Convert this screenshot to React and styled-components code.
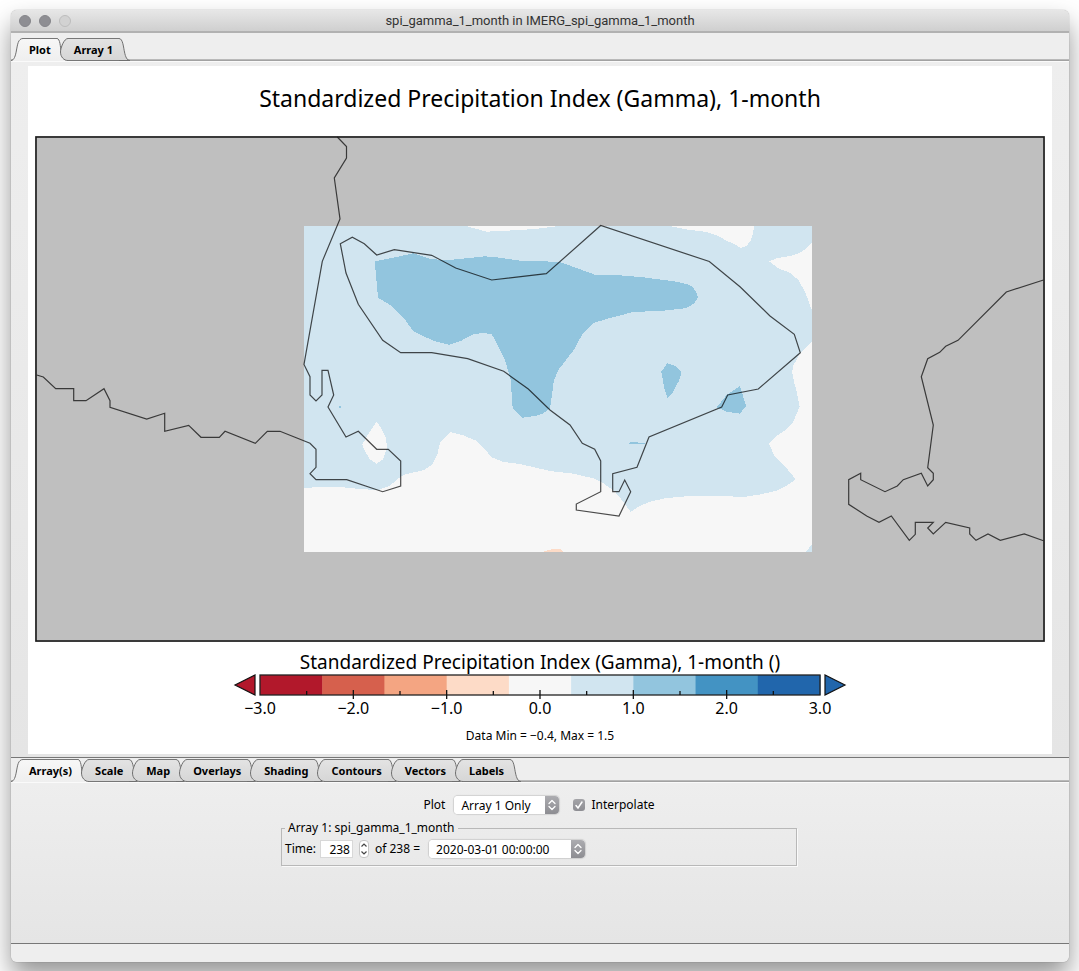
import React, { useState } from "react";
import styled, { createGlobalStyle } from "styled-components";

const GlobalStyle = createGlobalStyle`
  *, *::before, *::after { box-sizing: border-box; }
  html, body { margin: 0; padding: 0; background: #fff; }
  body, button, input, select {
    font-family: "Noto Sans", "Open Sans", "Liberation Sans", sans-serif;
    color: #000;
  }
`;

const Desktop = styled.div`
  display: flex;
  min-height: 100vh;
  padding: 10px 10px 9px 11px;
  overflow: hidden;
`;

const Window = styled.main`
  flex: 1;
  min-width: 0;
  display: flex;
  flex-direction: column;
  border-radius: 6px;
  background: #eee;
  box-shadow: 0 0 1px rgba(0, 0, 0, 0.5), 0 14px 26px rgba(0, 0, 0, 0.42);
`;

const TitleBar = styled.header`
  display: grid;
  grid-template-columns: 1fr auto 1fr;
  align-items: center;
  height: 23px;
  padding: 0 8px;
  border-radius: 6px 6px 0 0;
  border-bottom: 2px solid #b1b1b1;
  background: linear-gradient(#e7e7e7, #cfcfcf);
`;

const Lights = styled.div`
  display: flex;
  gap: 8px;
`;

const Light = styled.button`
  width: 12px;
  height: 12px;
  padding: 0;
  border-radius: 50%;
  border: 1px solid ${(p) => (p.disabled ? "#bdbdbd" : "#85858a")};
  background: ${(p) => (p.disabled ? "#d2d2d2" : "#8e8e93")};
`;

const WindowTitle = styled.h1`
  margin: 0;
  font-family: Roboto, "Liberation Sans", sans-serif;
  font-size: 13px;
  font-weight: 400;
  line-height: 20px;
  color: #333;
`;

const TabStrip = styled.div`
  display: flex;
  align-items: flex-end;
  padding-top: ${(p) => p.$space}px;
  background: linear-gradient(to top, #a2a2a2 0 1px, #b9b9b9 1px 2px, #eee 2px);
`;

const TabButton = styled.button`
  display: flex;
  height: 23px;
  margin: 0;
  margin-right: -8px;
  padding: 0;
  border: 0;
  background: none;
  font-size: 11px;
  font-weight: 700;
`;

const TabLabel = styled.span`
  height: 23px;
  padding: 0 6px;
  border-top: 1px solid #777;
  border-bottom: 1px solid ${(p) => (p.$active ? "#efefef" : "#777")};
  background: ${(p) =>
    p.$active ? "linear-gradient(#f7f7f7, #efefef)" : "linear-gradient(#e3e3e3, #d6d6d6)"};
  line-height: 22px;
`;

function TabCap({ active, side }) {
  const id = `cap-${active ? "on" : "off"}-${side}`;
  const shapes = {
    start: { w: 12, fill: "M12 0C6 0 6 6 5 12C4 18 3 22.500 0 22.500V23H12Z", line: "M12 .5C7 .5 6.500 7 5.500 12C4.500 18 3 22.500 0 22.500" },
    left: { w: 8, fill: "M8 0C3 0 .5 10 .5 14C.5 19 4 23 8 23Z", line: "M8 .5C4 .5 .5 10 .5 14C.5 19 4 22.500 8 22.500" },
    right: { w: 11, fill: "M0 0C4 0 4.500 10 5.500 14C6.500 19 8 23 11 23H0Z", line: "M0 .5C4 .5 4.500 10 5.500 14C6.500 19 8 22.500 11 22.500H0" },
    rightOn: { w: 11, fill: "M0 0C3 0 3.500 9 4 14C4 19 7 23 11 23H0Z", line: "M0 .5C3 .5 3.500 9 4 14" },
  };
  const s = shapes[active ? (side === "left" ? "start" : "rightOn") : side];
  return (
    <svg width={s.w} height="23" viewBox={`0 0 ${s.w} 23`} aria-hidden="true">
      <defs>
        <linearGradient id={id} x1="0" y1="0" x2="0" y2="1">
          <stop offset="0" stopColor={active ? "#f7f7f7" : "#e3e3e3"} />
          <stop offset="1" stopColor={active ? "#efefef" : "#d6d6d6"} />
        </linearGradient>
      </defs>
      <path d={s.fill} fill={`url(#${id})`} />
      <path d={s.line} fill="none" stroke="#6f6f6f" />
    </svg>
  );
}

function Tabs({ names, space }) {
  const [current, setCurrent] = useState(names[0]);
  return (
    <TabStrip role="tablist" $space={space}>
      {names.map((name) => {
        const active = name === current;
        return (
          <TabButton key={name} type="button" role="tab" aria-selected={active} onClick={() => setCurrent(name)}>
            <TabCap active={active} side="left" />
            <TabLabel $active={active}>{name}</TabLabel>
            <TabCap active={active} side="right" />
          </TabButton>
        );
      })}
    </TabStrip>
  );
}

const PlotPane = styled.section`
  padding: 4px 17px 3px;
  border-top: 1px solid #fafafa;
  border-bottom: 1px solid #777;
  background: linear-gradient(#eee, #e5e5e5);
`;

const Sheet = styled.div`
  display: flex;
  flex-direction: column;
  align-items: center;
  padding: 0 7px 8px;
  background: #fff;
`;

const PlotTitle = styled.h2`
  margin: 0;
  font-size: 23px;
  font-weight: 400;
  line-height: 65px;
  height: 70px;
`;

const MapDrawing = styled.svg`
  display: block;
  width: 100%;
  height: auto;
`;

const ScaleTitle = styled.h3`
  margin: 8px 0 0;
  font-size: 19px;
  font-weight: 400;
  line-height: 24px;
`;

const ScaleDrawing = styled.svg`
  display: block;
  width: 616px;
  max-width: 100%;
  height: auto;
  font-size: 16px;
`;

const DataNote = styled.p`
  margin: 4px 0 0;
  font-size: 12px;
  line-height: 20px;
`;

function PrecipitationMap() {
  return (
    <MapDrawing viewBox="35 136 1010 506" role="img" aria-label="Map of the precipitation index">
      <rect x="35" y="136" width="1010" height="506" fill="#bfbfbf" />
      <g shapeRendering="crispEdges">
        <rect x="304" y="226" width="508" height="326" fill="#d1e5f0" />
        <g fill="#f7f7f7">
          <path d="M466 226L486.700 231.700L507 230.700L535 229L559 226Z" />
          <path d="M669 226L687 229.500L705 231.700L716 235L726.700 240.700L734 244L740.700 248L746.700 245.700L751 240L753.300 231.700L754 226Z" />
          <path d="M812 242.700L803.300 250.700Q797 254.500 790 256L776.700 258.300L769 261.300L778.300 268.300L790 272.700L798.300 280L805 291.700L809.300 303.300L812 310.700Z" />
          <path d="M812 341.700L800 353.300L792.700 366.700L792.300 373.300L794.300 383.300L795.700 387L799.700 406.700L793.300 421.700L786.700 429.300L776.700 436L769 443.700L774 455L786.700 468.300L795.700 479.300L786.700 485.700L776.700 490.700L760 494.500L743.300 497L723.300 496H690L666.700 498L650 501.700L638.300 506.700L630.700 512L625 504L615 491.700L603.300 483.300L593.300 478.300L573.300 473.700L550 471L520 464L503.300 462L491.700 457.300L481.700 445.700L476.700 441L463.300 435.300L450 432L440 442.300L437.300 455L431.700 465L423.300 470.300L405 474.300L398.300 478.300L390 485.700L378.300 490L363.300 489.300L340 487H320L304 488V552H806L812 544Z" />
          <path d="M376.700 421.700L369.300 432.300L362.300 444.300L365 451.700L370 459.300L376.700 463.700L383.300 459L387 447.300L386 438.300L381.700 429.300Z" />
        </g>
        <path d="M542 552L548 550L553 549H560L563 552Z" fill="#fddbc7" />
        <g fill="#92c5de">
          <path d="M374.700 261.300L393.300 257.700L413.300 253.300L430 258.700L443.300 260.300L456.700 259.300L485 256.300L500 257.700L520 260.700L536.700 261L560 262L595 274.700L616.700 275L643.300 277.300L676.700 281.700L688.300 284.700Q695 287 698 297.300Q696 304 685 308.300L663.300 310.700L633.300 312L610 318L593.300 323L582.300 334L575 348.300L558.300 370L554 380L550 408.300L543.300 413.300L535 416L522.300 417.700L512.700 408.300L510.700 380L505 360L496.700 343.300L491.700 334L483.300 333L473.300 334.300L460 341.300L449 344.700L433.300 340.700L413.300 331.300L403.300 317.300L391.700 306L378 297.700Z" />
          <path d="M667.300 363.300L675 365.700L681.700 371.700L679.300 380L673.300 391.700L667.300 398L664.300 388.300L661.300 371.700Z" />
          <path d="M716.700 407.300L726.700 395L740 386L746 406L740 413.700L726.700 411.700Z" />
          <path d="M630 442H638V443H645V444H629V443H630Z" />
          <path d="M339 406H341V408H339Z" />
        </g>
      </g>
      <g fill="none" stroke="#000" strokeOpacity=".7" strokeWidth="1.200">
        <path d="M36.700 375L43.300 377L55.700 388.700H73.700V400.700H86L104 388.700L110 400.700V407.300L146.700 419L164.700 413.300V431.300L188.700 425.300L201 437.300H219.300L225 431.300L255.300 443.300L267.300 431.300H280L310 443.300L316 449.300V467.300L310 473.700L316 479.700H346.700L382.700 491.700L400.700 486V461L388.300 449.300H376.700L358.300 431.300L346 437L328 407L333.700 395L328 370.300H322V395L316 401L310 395V376.700L304 364.500L322.300 261.300L340 219L334.300 178L346.500 158V146.500L337.300 137" />
        <path d="M340.300 243.700L352.300 237.300L364.300 243.700L376.700 255L394.300 249.700L431.700 255.300L455.700 268L491.700 280L546.300 273.700L600.700 225.500L709.300 261.500L740 286.700L770 316L794.300 334.300L800.300 352.700L758.300 389L727.700 395L721.700 407L649 437L637 467.300L612.700 473.700V491.700H619L624.700 480L630.700 491.700L619 516L576.300 510V504L600.700 491.700V461L594.700 449.300L582.300 443.300L570 425L550 410L528.300 389L503.700 371.300L467.700 358.700L431.700 352.700H400.700L382.700 340.300L358.300 304.300L346 273Z" />
        <path d="M1043.500 280L1006.300 292L958 340.300L945.700 346.300L939.700 352.300L927.700 358.700L921.300 376.700L933.300 425L927.700 467.700L933.300 473.300V479.700L927.700 486L921.300 473.300L903.300 479.700L897.300 486L885 491.700L860.700 479.700V473.300L848.700 479.700V504.300L866.700 516L879 522.300L891.300 516L909.300 540.300L915.300 534.300V522.300H933.300L927.700 528L933.300 534L945.700 522.300L969.700 528V534L976 540.300L988 534L1000.300 540.300L1024.300 534L1043.500 540.700" />
      </g>
      <rect x="36" y="137" width="1008" height="504" fill="none" stroke="#1a1a1a" strokeWidth="1.600" />
    </MapDrawing>
  );
}

const SCALE_COLORS = ["#b2182b", "#d6604d", "#f4a582", "#fddbc7", "#f7f7f7", "#d1e5f0", "#92c5de", "#4393c3", "#2166ac"];
const SCALE_LABELS = ["−3.0", "−2.0", "−1.0", "0.0", "1.0", "2.0", "3.0"];

function ColorScale() {
  const left = 28;
  const width = 560;
  const cell = width / SCALE_COLORS.length;
  const step = width / (SCALE_LABELS.length - 1);
  return (
    <ScaleDrawing viewBox="0 0 616 48" role="img" aria-label="Color scale from −3 to 3">
      {SCALE_COLORS.map((color, i) => (
        <rect key={color} x={left + i * cell} y="1" width={cell + 0.5} height="20" fill={color} />
      ))}
      <rect x={left} y="1" width={width} height="20" fill="none" stroke="#222" strokeWidth="1.300" />
      <path d="M3 11L23 1V21Z" fill="#b2182b" stroke="#111" strokeWidth="1.200" />
      <path d="M613 11L593 1V21Z" fill="#2166ac" stroke="#111" strokeWidth="1.200" />
      {SCALE_LABELS.map((label, i) => {
        const x = left + i * step;
        const inner = i > 0 && i < SCALE_LABELS.length - 1;
        return (
          <g key={label}>
            {inner && <path d={`M${x} 16V25`} stroke="#111" strokeWidth="1.300" />}
            {i < SCALE_LABELS.length - 1 && <path d={`M${x + step / 2} 17V21`} stroke="#111" strokeWidth="1.300" />}
            <text x={x} y="40" textAnchor="middle">{label}</text>
          </g>
        );
      })}
    </ScaleDrawing>
  );
}

const ControlPane = styled.section`
  flex: 1;
  display: flex;
  flex-direction: column;
  align-items: center;
  padding: 13px 17px 13px 15px;
  border-top: 1px solid #fafafa;
  background: linear-gradient(#eee, #e5e5e5);
  font-size: 12px;
  line-height: 18px;
`;

const PlotRow = styled.div`
  display: flex;
  align-items: center;
`;

const Caption = styled.label`
  display: flex;
  align-items: center;
  margin-right: ${(p) => p.$gap || 0}px;
`;

const SelectBox = styled.span`
  display: inline-grid;
  width: ${(p) => p.$width}px;
  height: 18px;
  margin-right: ${(p) => p.$gap || 0}px;
  border-radius: 4px;
  background: #fff;
  box-shadow: 0 0 1px 1px rgba(0, 0, 0, 0.12);

  > * { grid-area: 1 / 1; }
  > svg { justify-self: end; pointer-events: none; }
`;

const Select = styled.select`
  appearance: none;
  width: 100%;
  height: 18px;
  padding: 0 20px 0 7px;
  border: 0;
  border-radius: 4px;
  background: #fff;
  font-size: 12px;
  line-height: 17px;
`;

function PopUp({ id, width, gap, value, label }) {
  return (
    <SelectBox $width={width} $gap={gap}>
      <Select id={id} defaultValue={value} aria-label={label}>
        <option>{value}</option>
      </Select>
      <svg width="14" height="18" viewBox="0 0 14 18" aria-hidden="true">
        <defs>
          <linearGradient id={`${id}-shade`} x1="0" y1="0" x2="0" y2="1">
            <stop offset="0" stopColor="#acacb0" />
            <stop offset="1" stopColor="#8d8d92" />
          </linearGradient>
        </defs>
        <path d="M0 0H10a4 4 0 0 1 4 4V14a4 4 0 0 1-4 4H0Z" fill={`url(#${id}-shade)`} />
        <path d="M4 7.500L7 4.500L10 7.500M4 10.500L7 13.500L10 10.500" fill="none" stroke="#fff" strokeWidth="1.300" strokeLinecap="round" strokeLinejoin="round" />
      </svg>
    </SelectBox>
  );
}

const CheckHolder = styled.span`
  display: inline-grid;
  width: 12px;
  height: 12px;
  margin-right: 6px;

  > * { grid-area: 1 / 1; }
  > svg { pointer-events: none; }
`;

const CheckInput = styled.input`
  appearance: none;
  width: 12px;
  height: 12px;
  margin: 0;
  border-radius: 3px;
  background: #d0d0d0;
  &:checked { background: linear-gradient(#a4a4a8, #8e8e93); }
`;

const ArrayGroup = styled.fieldset`
  width: 516px;
  max-width: 100%;
  min-width: 0;
  margin: 5px 0 0;
  padding: 3px 3px 7px;
  border: 1px solid #b8b8b8;
  box-shadow: 1px 1px 0 #fafafa;
`;

const GroupName = styled.legend`
  padding: 0 3px;
`;

const TimeRow = styled.div`
  display: flex;
  align-items: center;
`;

const TimeInput = styled.input`
  width: 33px;
  height: 18px;
  margin-right: 6px;
  padding: 0 2px 0 0;
  border: 1px solid #d8d8d8;
  background: #fff;
  font-size: 12px;
  text-align: right;
`;

const Stepper = styled.span`
  display: flex;
  flex-direction: column;
  width: 10px;
  height: 18px;
  margin-right: 6px;
  border: 1px solid #c6c6c6;
  border-radius: 4px;
  background: #fff;
`;

const StepButton = styled.button`
  flex: 1;
  display: flex;
  justify-content: center;
  align-items: center;
  padding: 0;
  border: 0;
  background: none;
`;

function StepArrow({ d }) {
  return (
    <svg width="6" height="4" viewBox="0 0 6 4" aria-hidden="true">
      <path d={d} fill="none" stroke="#444" strokeWidth="1.200" />
    </svg>
  );
}

const StatusBar = styled.footer`
  height: 19px;
  border-top: 1px solid #777;
  border-radius: 0 0 6px 6px;
  background: #eee;
`;

export default function App() {
  const [time, setTime] = useState(238);
  const [smooth, setSmooth] = useState(true);
  return (
    <Desktop>
      <GlobalStyle />
      <Window>
        <TitleBar>
          <Lights>
            <Light type="button" aria-label="Close" />
            <Light type="button" aria-label="Minimize" />
            <Light type="button" aria-label="Zoom" disabled />
          </Lights>
          <WindowTitle>spi_gamma_1_month in IMERG_spi_gamma_1_month</WindowTitle>
        </TitleBar>
        <Tabs names={["Plot", "Array 1"]} space={5} />
        <PlotPane>
          <Sheet>
            <PlotTitle>Standardized Precipitation Index (Gamma), 1-month</PlotTitle>
            <PrecipitationMap />
            <ScaleTitle>Standardized Precipitation Index (Gamma), 1-month ()</ScaleTitle>
            <ColorScale />
            <DataNote>Data Min = −0.4, Max = 1.5</DataNote>
          </Sheet>
        </PlotPane>
        <Tabs names={["Array(s)", "Scale", "Map", "Overlays", "Shading", "Contours", "Vectors", "Labels"]} space={1} />
        <ControlPane>
          <PlotRow>
            <Caption htmlFor="plot-mode" $gap={9}>Plot</Caption>
            <PopUp id="plot-mode" width={105} gap={14} value="Array 1 Only" />
            <Caption>
              <CheckHolder>
                <CheckInput type="checkbox" checked={smooth} onChange={(e) => setSmooth(e.target.checked)} />
                <svg width="12" height="12" viewBox="0 0 12 12" aria-hidden="true">
                  {smooth && <path d="M3 6.500L5 9L9 3" fill="none" stroke="#fff" strokeWidth="1.500" strokeLinecap="round" />}
                </svg>
              </CheckHolder>
              Interpolate
            </Caption>
          </PlotRow>
          <ArrayGroup>
            <GroupName>Array 1: spi_gamma_1_month</GroupName>
            <TimeRow>
              <Caption htmlFor="time-index" $gap={4}>Time:</Caption>
              <TimeInput id="time-index" value={time} onChange={(e) => setTime(Number(e.target.value) || 0)} />
              <Stepper>
                <StepButton type="button" aria-label="Next time" onClick={() => setTime(Math.min(238, time + 1))}>
                  <StepArrow d="M.5 3.500L3 1L5.500 3.500" />
                </StepButton>
                <StepButton type="button" aria-label="Previous time" onClick={() => setTime(Math.max(1, time - 1))}>
                  <StepArrow d="M.5 .5L3 3L5.500 .5" />
                </StepButton>
              </Stepper>
              <Caption htmlFor="time-date" $gap={9}>of 238 =</Caption>
              <PopUp id="time-date" width={156} value="2020-03-01 00:00:00" />
            </TimeRow>
          </ArrayGroup>
        </ControlPane>
        <StatusBar />
      </Window>
    </Desktop>
  );
}
